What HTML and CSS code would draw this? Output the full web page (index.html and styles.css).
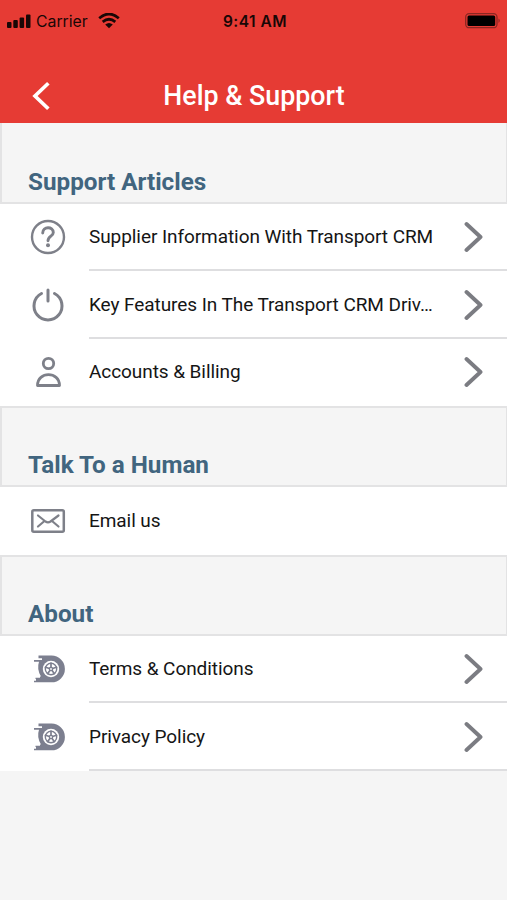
FILE: index.html
```html
<!DOCTYPE html>
<html lang="en">
<head>
<meta charset="utf-8">
<title>Help &amp; Support</title>
<link rel="stylesheet" href="styles.css">
</head>
<body>
<svg class="defs" width="0" height="0" aria-hidden="true">
  <defs>
    <symbol id="chevron" viewBox="0 0 20 34"><path d="M2.5 4 16.5 17 2.5 30" fill="none" stroke="currentColor" stroke-width="3.9" stroke-linecap="round" stroke-linejoin="round"/></symbol>
    <symbol id="wheel" viewBox="0 0 40 40">
      <path d="M10.500 6.500H23.500A13.300 13.300 0 0 1 23.500 33.300H6V31.700H8V30H7.500V28.800H12V27.500H13Q8.500 20 11 12.700H6V11H14V9.300H10.500Z" fill="currentColor"/>
      <circle cx="23" cy="20" r="8.200" fill="#fff"/>
      <circle cx="23" cy="20" r="5.700" fill="none" stroke="currentColor" stroke-width="1.400"/>
      <path d="M23 20V13.500M23 20 29.200 18M23 20 26.800 25.300M23 20 19.200 25.300M23 20 16.800 18" stroke="currentColor" stroke-width="1.700"/>
      <circle cx="23" cy="20" r="2.300" fill="currentColor"/><circle cx="23" cy="20" r=".9" fill="#fff"/>
    </symbol>
  </defs>
</svg>
<header class="header">
  <div class="status">
    <div class="network">
      <svg width="24" height="14" viewBox="0 0 24 14"><rect x="0" y="8" width="4.500" height="6" rx="1"/><rect x="6.300" y="6" width="4.500" height="8" rx="1"/><rect x="12.600" y="3.500" width="4.500" height="10.500" rx="1"/><rect x="19" y="0.500" width="4.500" height="13.500" rx="1"/></svg>
      <span class="carrier">Carrier</span>
      <svg width="22" height="16" viewBox="0 0 22 16"><path d="M1.200 5.200Q11-3.200 20.800 5.200M4.700 8.900Q11 3.600 17.300 8.900" fill="none" stroke="#190706" stroke-width="2.700"/><path d="M7.200 11.400Q11 8.400 14.800 11.400L11 15.300Z"/></svg>
    </div>
    <time class="time">9:41 AM</time>
    <svg class="battery" width="36" height="16" viewBox="0 0 36 16"><rect x=".7" y=".7" width="31.300" height="14" rx="3.500" fill="none" stroke="#8b2722" stroke-width="1.300"/><rect x="2.500" y="2.500" width="27.700" height="10.500" rx="1.500" fill="#000"/><path d="M33.500 5.500Q36 7.700 33.500 10Z" fill="#8b2722"/></svg>
  </div>
  <nav class="nav">
    <svg class="back" width="20" height="32" viewBox="0 0 20 32"><path d="M16 4.500 4 16 16 27.500" fill="none" stroke="#fff" stroke-width="3.700" stroke-linecap="square" stroke-linejoin="miter"/></svg>
    <h1 class="title">Help &amp; Support</h1>
  </nav>
</header>
<main>
  <section>
    <h2 class="heading">Support Articles</h2>
    <a class="row">
      <svg class="icon" viewBox="0 0 40 40"><g fill="none" stroke="currentColor"><circle cx="20" cy="20" r="16" stroke-width="2.400"/><path d="M14.700 16C14.700 9 25.300 9 25.300 15.500C25.300 19.300 20 19 20 23.700" stroke-width="2.900" stroke-linecap="round"/></g><circle cx="20" cy="28.300" r="2" fill="currentColor"/></svg>
      <span class="body"><span class="label">Supplier Information With Transport CRM</span><svg class="chevron"><use href="#chevron"/></svg></span>
    </a>
    <a class="row">
      <svg class="icon" viewBox="0 0 40 40"><path d="M13.500 8.500A14 14 0 1 0 26.500 8.500M20 5V16" fill="none" stroke="currentColor" stroke-width="3" stroke-linecap="round"/></svg>
      <span class="body"><span class="label">Key Features In The Transport CRM Driv…</span><svg class="chevron"><use href="#chevron"/></svg></span>
    </a>
    <a class="row">
      <svg class="icon" viewBox="0 0 40 40"><g fill="none" stroke="currentColor" stroke-width="2.800" stroke-linejoin="round"><circle cx="20.500" cy="11.500" r="5.200"/><path d="M9.500 33.500C9.500 19 31.500 19 31.500 33.500Z"/></g></svg>
      <span class="body"><span class="label">Accounts &amp; Billing</span><svg class="chevron"><use href="#chevron"/></svg></span>
    </a>
  </section>
  <section>
    <h2 class="heading">Talk To a Human</h2>
    <a class="row">
      <svg class="icon" viewBox="0 0 40 40"><g fill="none" stroke="currentColor" stroke-linecap="round" stroke-linejoin="round"><rect x="4.300" y="9.300" width="31.500" height="21.400" rx="1.500" stroke-width="2.500"/><path d="M10 14.500 17.500 20.500Q20 22.200 22.500 20.500L30.500 14.500M10 25.500 16.500 20M30.500 25.500 24 20" stroke-width="2.200"/></g></svg>
      <span class="body"><span class="label">Email us</span></span>
    </a>
  </section>
  <section>
    <h2 class="heading">About</h2>
    <a class="row">
      <svg class="icon wheel"><use href="#wheel"/></svg>
      <span class="body"><span class="label">Terms &amp; Conditions</span><svg class="chevron"><use href="#chevron"/></svg></span>
    </a>
    <a class="row final">
      <svg class="icon wheel"><use href="#wheel"/></svg>
      <span class="body"><span class="label">Privacy Policy</span><svg class="chevron"><use href="#chevron"/></svg></span>
    </a>
  </section>
</main>
</body>
</html>
```
FILE: styles.css
```css
* { box-sizing: border-box; }
body {
  margin: 0;
  min-height: 900px;
  background: #f5f5f5;
  color: #151515;
  font-family: Roboto, sans-serif;
}
.defs { position: absolute; }
.header { height: 122.5px; background: #e63b34; }
.status {
  display: grid;
  grid-template-columns: 1fr auto 1fr;
  align-items: center;
  height: 42px;
  padding: 0 6px 0 7px;
  color: #190706;
  font-family: Inter, sans-serif;
}
.network { display: flex; align-items: center; fill: #190706; }
.carrier { margin: 0 10px 0 5px; font-size: 15.8px; }
.time { padding-left: 2px; font-size: 15.5px; font-weight: 600; letter-spacing: 0.5px; }
.battery { justify-self: end; }
.nav {
  display: grid;
  grid-template-columns: 51px 1fr 50px;
  align-items: center;
  height: 107px;
}
.back { justify-self: end; }
.title {
  margin: 0;
  color: #fff;
  font-size: 26.8px;
  font-weight: 500;
  text-align: center;
}
.heading {
  display: flex;
  align-items: flex-end;
  height: 81px;
  margin: 0;
  padding: 0 26px 6px;
  border: 2px solid #e3e3e4;
  border-right-width: 1px;
  color: #41657f;
  font-size: 24.25px;
  font-weight: 700;
  line-height: 28px;
}
section:first-child .heading { border-top: 0; }
.row {
  display: flex;
  align-items: center;
  height: 67.5px;
  padding-left: 28px;
  background: #fff;
}
.icon { flex: none; width: 40px; height: 40px; color: #7e8089; }
.wheel { color: #7c7f8f; }
.body {
  display: flex;
  flex: 1;
  align-items: center;
  justify-content: space-between;
  min-width: 0;
  height: 100%;
  margin-left: 21px;
  padding: 2px 23px 0 0;
  border-bottom: 2px solid #dedee0;
}
.row:last-child .body { border-color: transparent; }
.row.final .body { border-color: #dedee0; }
.label {
  font-size: 19px;
  letter-spacing: -0.07px;
  line-height: 26px;
  white-space: nowrap;
}
.chevron { flex: none; width: 20px; height: 34px; color: #7b7c82; }
```
